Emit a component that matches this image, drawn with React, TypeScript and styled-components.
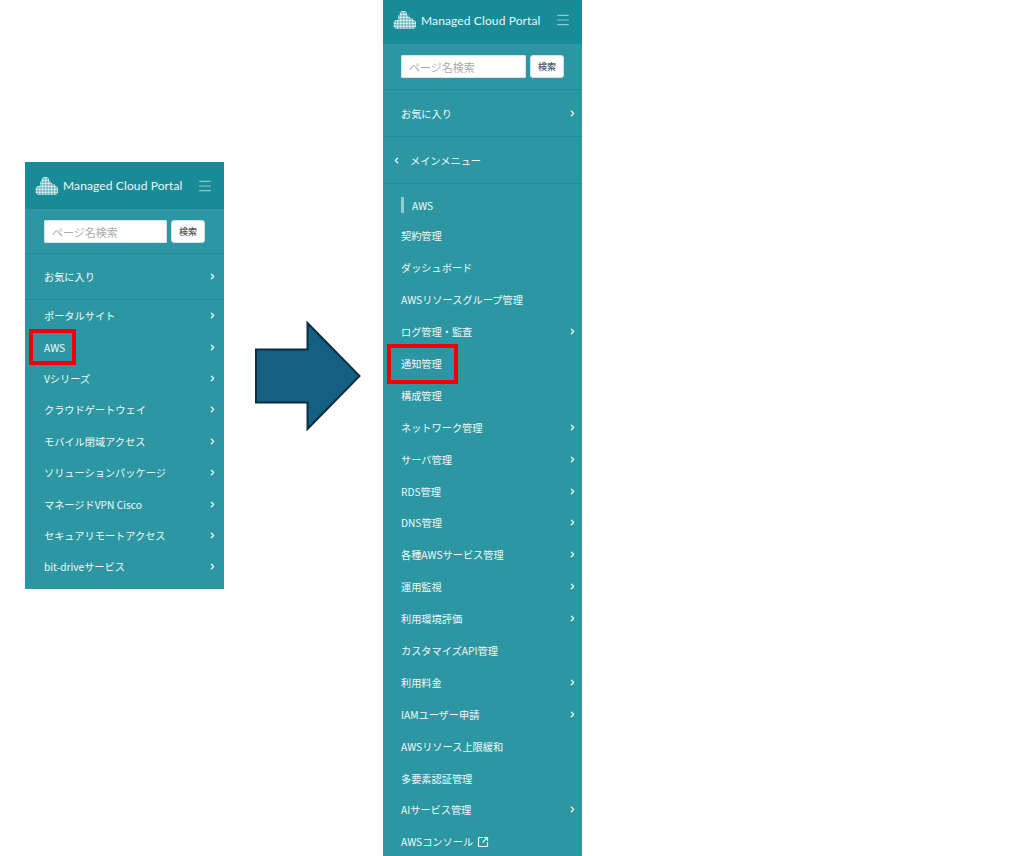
import { createGlobalStyle } from "styled-components";
import styled from "styled-components";
import { ChevronLeft, ChevronRight, SquareArrowOutUpRight, Menu } from "lucide-react";

const PORTAL_ITEMS = [
  { label: "ポータルサイト", more: true },
  { label: "AWS", more: true, marked: true },
  { label: "Vシリーズ", more: true },
  { label: "クラウドゲートウェイ", more: true },
  { label: "モバイル閉域アクセス", more: true },
  { label: "ソリューションパッケージ", more: true },
  { label: "マネージドVPN Cisco", more: true },
  { label: "セキュアリモートアクセス", more: true },
  { label: "bit-driveサービス", more: true },
];

const AWS_ITEMS = [
  { label: "契約管理" },
  { label: "ダッシュボード" },
  { label: "AWSリソースグループ管理" },
  { label: "ログ管理・監査", more: true },
  { label: "通知管理", marked: true },
  { label: "構成管理" },
  { label: "ネットワーク管理", more: true },
  { label: "サーバ管理", more: true },
  { label: "RDS管理", more: true },
  { label: "DNS管理", more: true },
  { label: "各種AWSサービス管理", more: true },
  { label: "運用監視", more: true },
  { label: "利用環境評価", more: true },
  { label: "カスタマイズAPI管理" },
  { label: "利用料金", more: true },
  { label: "IAMユーザー申請", more: true },
  { label: "AWSリソース上限緩和" },
  { label: "多要素認証管理" },
  { label: "AIサービス管理", more: true },
  { label: "AWSコンソール", external: true },
];

// cloud made of dots: [first row, last row] per column
const CLOUD_COLUMNS = [
  [7, 10], [6, 11], [6, 11], [3, 11], [1, 11], [0, 11], [0, 11], [0, 11], [1, 11],
  [3, 11], [4, 11], [5, 11], [5, 11], [6, 11], [7, 10],
];

function CloudLogo() {
  return (
    <svg width="24" height="18" viewBox="0 0 30 24" fill="#fff" style={{ flexShrink: 0 }}>
      {CLOUD_COLUMNS.flatMap(([from, to], col) =>
        Array.from({ length: to - from + 1 }, (_, i) => (
          <rect key={`${col}-${i}`} x={col * 2} y={(from + i) * 2} width="1.6" height="1.6" />
        ))
      )}
    </svg>
  );
}

interface Item {
  label: string;
  more?: boolean;
  marked?: boolean;
  external?: boolean;
}

interface Mark {
  left: number;
  width: number;
  height: number;
}

function NavItems({ items, rowHeight, mark, second }: { items: Item[]; rowHeight: number; mark: Mark; second?: boolean }) {
  return (
    <>
      {items.map((item) => (
        <Row key={item.label} $height={rowHeight} $second={second}>
          <RowLabel>
            {item.label}
            {item.external && <SquareArrowOutUpRight size={12} strokeWidth={2.4} />}
            {item.marked && <MarkBox $left={mark.left} $width={mark.width} $height={mark.height} />}
          </RowLabel>
          {item.more && <ChevronRight size={9} strokeWidth={3.5} />}
        </Row>
      ))}
    </>
  );
}

function PanelTop({ second }: { second?: boolean }) {
  return (
    <>
      <Header $height={second ? 44 : 47} $second={second}>
        <Brand>
          <CloudLogo />
          <BrandName>Managed Cloud Portal</BrandName>
        </Brand>
        <Burger>
          <Menu size={16} strokeWidth={1.8} />
        </Burger>
      </Header>
      <Search $second={second}>
        <SearchInput $width={second ? 125 : 123} placeholder="ページ名検索" readOnly />
        <SearchButton>検索</SearchButton>
      </Search>
      <Section>
        <Row $height={second ? 46 : 45} $second={second}>
          <RowLabel>お気に入り</RowLabel>
          <ChevronRight size={9} strokeWidth={3.5} />
        </Row>
      </Section>
    </>
  );
}

export default function App() {
  return (
    <Page>
      <GlobalStyle />
      <FirstPanel>
        <PanelTop />
        <NavItems items={PORTAL_ITEMS} rowHeight={31.4} mark={{ left: -15, width: 47, height: 36 }} />
      </FirstPanel>
      <Arrow width="108" height="113" viewBox="0 0 108 113">
        <path
          d="M1 29.5H52.5V3L104.5 56L52.5 109V82.5H1Z"
          fill="#156082"
          stroke="#0b2e42"
          strokeWidth="2"
        />
      </Arrow>
      <SecondPanel>
        <PanelTop second />
        <Section>
          <MainMenu>
            <ChevronLeft size={9} strokeWidth={3.5} />
            メインメニュー
          </MainMenu>
        </Section>
        <GroupTitle>AWS</GroupTitle>
        <NavItems items={AWS_ITEMS} rowHeight={31.9} mark={{ left: -14, width: 71, height: 40 }} second />
      </SecondPanel>
    </Page>
  );
}

const GlobalStyle = createGlobalStyle`
  body {
    margin: 0;
    background: #fff;
    font-family: "Noto Sans CJK JP", "Noto Sans", sans-serif;
  }
`;

const Page = styled.div`
  display: flex;
  align-items: flex-start;
  height: 856px;
  padding-left: 25px;
  overflow: hidden;
`;

const Panel = styled.nav`
  width: 199px;
  flex-shrink: 0;
  background: #2c97a2;
  color: #f2f9fa;
`;

const FirstPanel = styled(Panel)`
  margin-top: 162px;
  padding-bottom: 6px;
`;

const SecondPanel = styled(Panel)`
  margin-left: 20px;
`;

const Arrow = styled.svg`
  flex-shrink: 0;
  margin: 320px 0 0 31px;
  display: block;
`;

const Header = styled.header<{ $height: number; $second?: boolean }>`
  height: ${({ $height }) => $height}px;
  background: #198b97;
  display: flex;
  align-items: center;
  justify-content: space-between;
  padding: 0 11px ${({ $second }) => ($second ? 4 : 0)}px 10px;
  box-sizing: border-box;
`;

const Brand = styled.div`
  display: flex;
  align-items: center;
  gap: 4px;
`;

const BrandName = styled.span`
  font-family: "Lato", sans-serif;
  font-size: 12px;
  font-weight: 400;
  letter-spacing: 0.12px;
  color: #eaf6f7;
  white-space: nowrap;
`;

const Burger = styled.span`
  display: flex;
  color: #8cc8ce;
`;

const Search = styled.div<{ $second?: boolean }>`
  display: flex;
  gap: 4px;
  padding: 11px ${({ $second }) => ($second ? 18 : 19)}px ${({ $second }) => ($second ? 11 : 10)}px;
  border-bottom: 1px solid #268a95;
`;

const SearchInput = styled.input<{ $width: number }>`
  width: ${({ $width }) => $width}px;
  height: 23px;
  box-sizing: border-box;
  border: 1px solid #d8e6e8;
  border-radius: 1px;
  padding: 0 7px;
  background: #fff;
  font: 400 11px "Noto Sans CJK JP", sans-serif;

  &::placeholder {
    color: #aaa;
  }
`;

const SearchButton = styled.button`
  width: 34px;
  height: 23px;
  padding: 0;
  box-sizing: border-box;
  border: 1px solid #d5dfe0;
  border-radius: 3px;
  background: #fff;
  color: #555;
  font: 500 9px "Noto Sans CJK JP", sans-serif;
`;

const Section = styled.div`
  border-bottom: 1px solid #268a95;
`;

const Row = styled.div<{ $height: number; $second?: boolean }>`
  height: ${({ $height }) => $height}px;
  box-sizing: border-box;
  display: flex;
  align-items: center;
  justify-content: space-between;
  padding: 0 ${({ $second }) => ($second ? 5 : 7)}px 0 ${({ $second }) => ($second ? 18 : 19)}px;
  font-size: 10.2px;
  font-weight: 400;
`;

const RowLabel = styled.span`
  position: relative;
  display: flex;
  align-items: center;
  gap: 4px;
  white-space: nowrap;
`;

const MarkBox = styled.span<{ $left: number; $width: number; $height: number }>`
  position: absolute;
  left: ${({ $left }) => $left}px;
  top: 50%;
  width: ${({ $width }) => $width}px;
  height: ${({ $height }) => $height}px;
  box-sizing: border-box;
  transform: translateY(-50%);
  border: 4px solid #f00000;
`;

const MainMenu = styled.div`
  height: 46px;
  display: flex;
  align-items: center;
  gap: 9px;
  padding-left: 9px;
  font-size: 10.2px;
  font-weight: 400;
`;

const GroupTitle = styled.div`
  height: 16px;
  display: flex;
  align-items: center;
  margin: 13px 0 7px 18px;
  padding-left: 8px;
  border-left: 3px solid #93cbd1;
  font-size: 10.2px;
  font-weight: 400;
`;
